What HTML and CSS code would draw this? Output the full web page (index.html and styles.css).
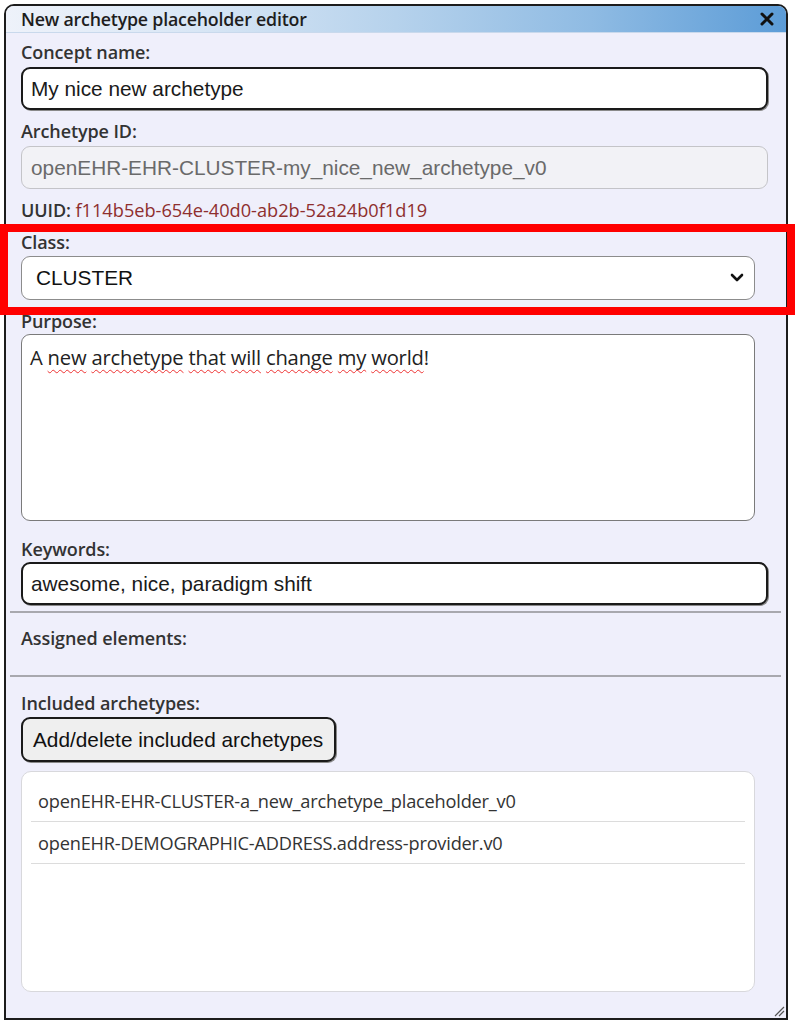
FILE: index.html
```html
<!DOCTYPE html>
<html>
<head>
<meta charset="utf-8">
<link rel="stylesheet" href="styles.css">
</head>
<body>
<div class="window">
  <div class="titlebar">
    <span class="title">New archetype placeholder editor</span>
    <svg class="close" width="14" height="14" viewBox="0 0 14 14"><path d="M2 2 L12 12 M12 2 L2 12" stroke="#111" stroke-width="3" stroke-linecap="round"/></svg>
  </div>
  <div class="content">
    <div class="label l-concept">Concept name:</div>
    <div class="input wide dark">My nice new archetype</div>

    <div class="label l-id">Archetype ID:</div>
    <div class="input wide disabled">openEHR-EHR-CLUSTER-my_nice_new_archetype_v0</div>

    <div class="label l-uuid">UUID: <span class="uuid">f114b5eb-654e-40d0-ab2b-52a24b0f1d19</span></div>

    <div class="label l-class">Class:</div>
    <div class="select">
      <span>CLUSTER</span>
      <svg class="chev" width="14" height="10" viewBox="0 0 14 10"><path d="M2 2 L7 7 L12 2" fill="none" stroke="#111" stroke-width="2.6" stroke-linecap="round" stroke-linejoin="round"/></svg>
    </div>

    <div class="label l-purpose">Purpose:</div>
    <div class="textarea">A <span class="sp">new</span> <span class="sp">archetype</span> <span class="sp">that</span> <span class="sp">will</span> <span class="sp">change</span> <span class="sp">my</span> <span class="sp">world</span>!</div>

    <div class="label l-keywords">Keywords:</div>
    <div class="input wide dark">awesome, nice, paradigm shift</div>

    <div class="rule r1"></div>
    <div class="label l-assigned">Assigned elements:</div>
    <div class="rule r2"></div>

    <div class="label l-included">Included archetypes:</div>
    <div class="btn">Add/delete included archetypes</div>

    <div class="list">
      <div class="item">openEHR-EHR-CLUSTER-a_new_archetype_placeholder_v0</div>
      <div class="item">openEHR-DEMOGRAPHIC-ADDRESS.address-provider.v0</div>
    </div>
  </div>
  <svg class="grip" width="12" height="12" viewBox="0 0 12 12"><path d="M11 2 L2 11 M11 6 L6 11" stroke="#555" stroke-width="1.2"/></svg>
</div>
<div class="highlight"></div>
</body>
</html>
```
FILE: styles.css
```css
* { box-sizing: border-box; }
html, body { margin: 0; padding: 0; background: #ffffff; }
body { width: 795px; height: 1024px; position: relative; overflow: hidden; }

.window {
  position: relative;
  margin: 4px 0 0 4px;
  width: 784px;
  height: 1016px;
  border: 2px solid #1c1c1c;
  border-radius: 10px 10px 0 0;
  background: #efeffb;
  overflow: hidden;
}

.titlebar {
  height: 27px;
  display: flex;
  align-items: center;
  justify-content: space-between;
  padding: 0 12px 0 15px;
  background: linear-gradient(90deg, #eef2fa 0%, #d8e6f5 25%, #b6d2ec 50%, #8fbbe3 75%, #5c9cd7 100%);
  border-bottom: 1px solid #c9d9ec;
}
.title {
  font-family: "Open Sans", "Noto Sans", sans-serif;
  font-weight: 600;
  font-size: 17.8px;
  letter-spacing: -0.2px;
  color: #1e1e1e;
}
.close { display: block; }

.content {
  padding: 0 18px 0 15px;
  display: flex;
  flex-direction: column;
  align-items: flex-start;
}

.label {
  font-family: "Open Sans", "Noto Sans", sans-serif;
  font-weight: 600;
  font-size: 18px;
  letter-spacing: -0.1px;
  line-height: 20px;
  height: 20px;
  color: #333;
}
.l-concept { margin-top: 9px; margin-bottom: 5px; }
.l-id { margin-top: 11px; margin-bottom: 5px; }
.l-uuid { margin-top: 11px; }
.uuid { font-weight: 400; color: #8e2e2e; letter-spacing: 0; font-size: 18.2px; }
.l-class { margin-top: 12px; margin-bottom: 4px; }
.l-purpose { margin-top: 11px; margin-bottom: 3px; }
.l-keywords { margin-top: 18px; margin-bottom: 3px; }
.l-assigned { margin-top: 15px; }
.l-included { margin-top: 16px; margin-bottom: 4px; }

.input {
  height: 43px;
  display: flex;
  align-items: center;
  padding-left: 8px;
  font-family: "Liberation Sans", Arial, sans-serif;
  font-size: 20.8px;
  border-radius: 9px;
  background: #fff;
  color: #1a1a1a;
}
.wide { width: 747px; }
.dark {
  border: 2px solid #1a1a1a;
  box-shadow: 1px 1px 0 #8a8a8a;
}
.disabled {
  border: 1.5px solid #c4c4c8;
  background: #f2f2f6;
  color: #6a6a6a;
  padding-left: 9px;
}

.select {
  width: 734px;
  height: 44px;
  display: flex;
  align-items: center;
  justify-content: space-between;
  padding: 0 10px 0 14px;
  border: 1.5px solid #8c8c8c;
  border-radius: 9px;
  background: #fff;
  font-family: "Liberation Sans", Arial, sans-serif;
  font-size: 20.8px;
  color: #111;
}
.chev { display: block; }

.textarea {
  width: 734px;
  height: 187px;
  padding: 9px 8px;
  border: 1.5px solid #7a7a7a;
  border-radius: 9px;
  background: #fff;
  font-family: "Open Sans", "Noto Sans", sans-serif;
  font-size: 20.2px;
  letter-spacing: -0.2px;
  line-height: 26px;
  color: #222;
}
.sp {
  text-decoration: underline wavy #ee3333;
  text-decoration-thickness: 1px;
  text-underline-offset: 4px;
  text-decoration-skip-ink: none;
}

.rule {
  align-self: stretch;
  margin: 0 -13px 0 -11px;
  height: 2px;
  background: #a8a8ae;
}
.r1 { margin-top: 6px; }
.r2 { margin-top: 27px; }

.btn {
  height: 45px;
  display: flex;
  align-items: center;
  padding: 0 10px;
  width: 315px;
  border: 2px solid #1a1a1a;
  border-radius: 9px;
  background: #efefef;
  box-shadow: 1px 1px 0 #8a8a8a;
  font-family: "Liberation Sans", Arial, sans-serif;
  font-size: 20.8px;
  color: #111;
}

.list {
  margin-top: 9px;
  width: 734px;
  height: 221px;
  padding: 8px 9px 0 9px;
  border: 1px solid #d8d8dc;
  border-radius: 10px;
  background: #fff;
}
.item {
  height: 42px;
  display: flex;
  align-items: center;
  padding-left: 7px;
  border-bottom: 1.5px solid #dcdcdc;
  font-family: "Open Sans", "Noto Sans", sans-serif;
  font-size: 18.2px;
  letter-spacing: -0.2px;
  color: #333;
}

.grip { position: absolute; right: 1px; bottom: 1px; }

.highlight {
  position: absolute;
  left: 0;
  top: 224px;
  width: 795px;
  height: 91px;
  border: 8px solid #ff0000;
}
```
